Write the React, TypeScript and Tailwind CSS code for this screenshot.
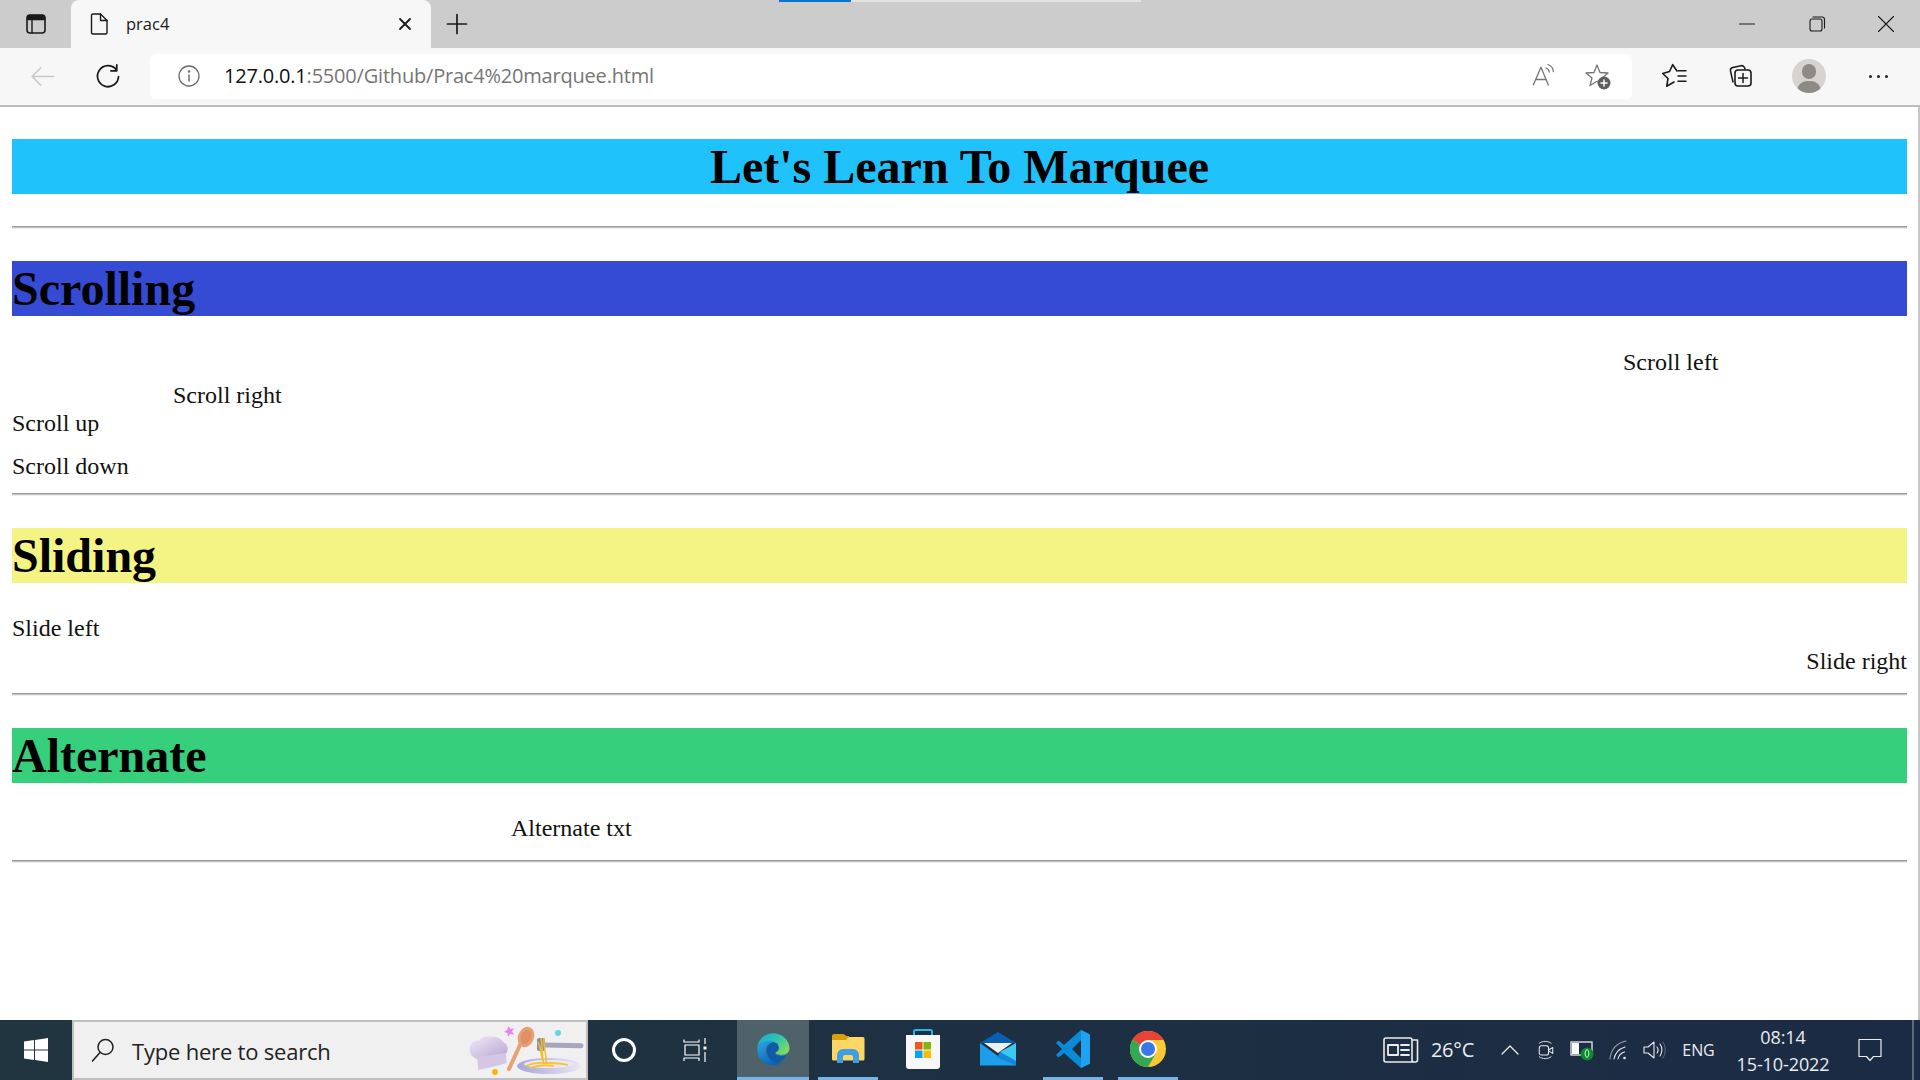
const ui = { fontFamily: '"Open Sans", "Noto Sans", sans-serif' };

const ToolIcon = ({ children, size = 24, view = '0 0 24 24', className = '' }: { children: React.ReactNode; size?: number; view?: string; className?: string }) => (
  <svg width={size} height={size} viewBox={view} fill="none" stroke="currentColor" strokeWidth="1.4" strokeLinecap="round" strokeLinejoin="round" className={className}>
    {children}
  </svg>
);

const Cell = ({ w, children }: { w: string; children?: React.ReactNode }) => (
  <div className={`flex h-full shrink-0 items-center justify-center ${w}`}>{children}</div>
);

const TabBar = () => (
  <div className="relative flex h-[48px] shrink-0 items-center bg-[#cccccc] text-[#1a1a1a]">
    {/* loading bar */}
    <div className="absolute left-[779px] top-0 flex h-[2px]">
      <div className="w-[72px] bg-[#0a74d4]" />
      <div className="w-[290px] bg-[#e2e2e2]" />
    </div>
    <Cell w="w-[71px]">
      <ToolIcon size={24}>
        <rect x="3" y="3" width="18" height="18" rx="3" strokeWidth="1.6" />
        <path d="M3.5 7.5h17V6a2.5 2.5 0 0 0-2.5-2.5H6A2.5 2.5 0 0 0 3.5 6z" fill="currentColor" />
        <path d="M8 8v13" />
      </ToolIcon>
    </Cell>
    <div className="flex h-full w-[360px] shrink-0 items-center rounded-t-[8px] bg-[#f7f7f7] pl-[16px]">
      <ToolIcon size={24}>
        <path d="M6 2h7.5L20 8.500V20.500A1.500 1.500 0 0 1 18.500 22h-12.500A1.500 1.500 0 0 1 4.500 20.500V3.500A1.500 1.500 0 0 1 6 2z" />
        <path d="M13.5 2v6.500H20" />
      </ToolIcon>
      <span className="ml-[15px] text-[16.5px]" style={ui}>prac4</span>
      <ToolIcon size={18} view="0 0 18 18" className="ml-auto mr-[17px]">
        <path d="M4 4l10 10M14 4L4 14" strokeWidth="1.8" />
      </ToolIcon>
    </div>
    <Cell w="w-[52px]">
      <ToolIcon size={24}>
        <path d="M12 2.5v19M2.5 12h19" strokeWidth="1.7" />
      </ToolIcon>
    </Cell>
    <div className="flex-1" />
    <Cell w="w-[70px]">
      <ToolIcon size={18} view="0 0 18 18"><path d="M1.5 9h15" strokeWidth="1.1" /></ToolIcon>
    </Cell>
    <Cell w="w-[70px]">
      <ToolIcon size={18} view="0 0 18 18">
        <rect x="2" y="4" width="12" height="12" rx="2" strokeWidth="1.1" />
        <path d="M5 2h9a2.5 2.5 0 0 1 2.5 2.5V13" strokeWidth="1.1" />
      </ToolIcon>
    </Cell>
    <Cell w="w-[68px]">
      <ToolIcon size={18} view="0 0 18 18"><path d="M1.5 1.5l15 15M16.5 1.5l-15 15" strokeWidth="1.1" /></ToolIcon>
    </Cell>
  </div>
);

const AddressBar = () => (
  <div className="flex h-[59px] shrink-0 items-center border-b-2 border-[#bdbdbd] bg-[#f7f7f7] pb-[1px] text-[#1a1a1a]">
    <Cell w="w-[84px]">
      <ToolIcon size={28} className="text-[#c9c9c9]"><path d="M22 12.5H4M11 5l-7.5 7.5L11 20" strokeWidth="1.3" /></ToolIcon>
    </Cell>
    <Cell w="w-[48px]">
      <ToolIcon size={28}>
        <path d="M19 6.5A9 9 0 1 0 21 12.5" strokeWidth="1.5" />
        <path d="M19.5 2.5v5h-5" strokeWidth="1.5" />
      </ToolIcon>
    </Cell>
    <div className="ml-[18px] flex h-[45px] w-[1482px] shrink-0 items-center rounded-[6px] bg-white">
      <div className="ml-[27px] flex w-[24px] justify-center">
        <ToolIcon size={24} className="text-[#6b6b6b]">
          <circle cx="12" cy="12" r="10" strokeWidth="1.3" />
          <path d="M12 11v6" strokeWidth="1.5" />
          <circle cx="12" cy="7.5" r=".6" fill="currentColor" />
        </ToolIcon>
      </div>
      <span className="ml-[23px] text-[20px] tracking-[-0.2px] text-[#767676]" style={ui}>
        <span className="text-[#111]">127.0.0.1</span>:5500/Github/Prac4%20marquee.html
      </span>
      <div className="ml-auto flex w-[103px] items-center justify-between pr-[21px] text-[#757575]">
        <ToolIcon size={28} view="0 0 28 28">
          <path d="M4.300 23L12 5.300 19.300 23M6.800 17.500h10.500" strokeWidth="1.3" />
          <path d="M17 6c2 .7 3 2.200 3.200 4M19 2.500c3.500 1.200 5 3.600 5.400 7" strokeWidth="1.3" />
        </ToolIcon>
        <ToolIcon size={28} view="0 0 28 28">
          <path d="M14 3l3 7.500 8 .5-6 5 2 7.500-7-4.200L7 23.500l2-7.500-6-5 8-.5z" strokeWidth="1.3" />
          <circle cx="21" cy="21" r="6.500" fill="#5f5f5f" stroke="none" />
          <path d="M21 18v6M18 21h6" stroke="#fff" strokeWidth="1.5" />
        </ToolIcon>
      </div>
    </div>
    <Cell w="w-[84px]">
      <ToolIcon size={28} view="0 0 28 28">
        <path d="M17 9L12.700 2.700 9.500 9.500 2.700 11.500 8 16.500 6.700 24.300 14 20" strokeWidth="1.600" />
        <path d="M18 8.700h8M18 14h8M18 19.300h8" strokeWidth="1.500" />
      </ToolIcon>
    </Cell>
    <Cell w="w-[48px]">
      <ToolIcon size={28} view="0 0 28 28">
        <path d="M7 20l-2.500-11a3 3 0 0 1 2.300-3.500L15 3.700c1.600-.3 2.900.3 3.600 2L19 7" strokeWidth="1.5" />
        <rect x="9" y="8" width="16" height="16" rx="3" strokeWidth="1.6" />
        <path d="M17 11.500v9M12.500 16h9" strokeWidth="1.5" />
      </ToolIcon>
    </Cell>
    <Cell w="w-[90px]">
      <div className="relative h-[34px] w-[34px] overflow-hidden rounded-full bg-[#d6d3d0]">
        <div className="absolute left-[10px] top-[5px] h-[15px] w-[14px] rounded-full bg-[#8e8a85]" />
        <div className="absolute left-[5px] top-[22px] h-[20px] w-[24px] rounded-full bg-[#8e8a85]" />
      </div>
    </Cell>
    <Cell w="w-[48px]">
      <div className="flex gap-[5px]">
        <div className="h-[3px] w-[3px] rounded-full bg-[#222]" />
        <div className="h-[3px] w-[3px] rounded-full bg-[#222]" />
        <div className="h-[3px] w-[3px] rounded-full bg-[#222]" />
      </div>
    </Cell>
  </div>
);

const Rule = () => <div className="mb-[32px] h-[3px] border-t border-b border-t-[#9a9a9a] border-b-[#eeeeee] bg-[#c4c4c4]" />;

const Heading = ({ color, center, children }: { color: string; center?: boolean; children: string }) => (
  <h1 className={`mb-[32px] h-[55px] text-[48px] font-bold leading-[56px] text-black ${color} ${center ? 'text-center' : ''}`}>{children}</h1>
);

const Marquee = ({ h, className = '', children }: { h: string; className?: string; children: string }) => (
  <div className={`${h} flex text-[24px] leading-[28px] text-[#111] ${className}`}>
    <span>{children}</span>
  </div>
);

const Page = () => (
  <div className="min-h-0 flex-1 overflow-hidden border-r-2 border-[#c6c6c6] bg-white pl-[12px] pr-[11px] pt-[32px]" style={{ fontFamily: '"Liberation Serif", serif' }}>
    <Heading color="bg-[#20c2fb]" center>Let's Learn To Marquee</Heading>
    <Rule />
    <Heading color="bg-[#364bd3]">Scrolling</Heading>
    <Marquee h="h-[33px]" className="pl-[1611px]">Scroll left</Marquee>
    <Marquee h="h-[28px]" className="pl-[161px]">Scroll right</Marquee>
    <Marquee h="h-[43px]">Scroll up</Marquee>
    <Marquee h="h-[41px]">Scroll down</Marquee>
    <Rule />
    <Heading color="bg-[#f4f484]">Sliding</Heading>
    <Marquee h="h-[33px]" className="-mt-[1px]">Slide left</Marquee>
    <Marquee h="h-[46px]" className="justify-end">Slide right</Marquee>
    <Rule />
    <Heading color="bg-[#36d07d]">Alternate</Heading>
    <Marquee h="h-[46px]" className="-mt-[1px] pl-[499px]">Alternate txt</Marquee>
    <Rule />
  </div>
);

// the food doodle on the right of the search box
const SearchArt = () => (
  <svg width="126" height="56" viewBox="460 1022 126 56" className="ml-auto shrink-0">
    <defs>
      <linearGradient id="hat" x1="0" y1="0" x2="1" y2="1">
        <stop offset="0" stopColor="#f0e8f6" />
        <stop offset="1" stopColor="#b7a5d3" />
      </linearGradient>
      <linearGradient id="plate" x1="0" y1="0" x2="1" y2="0">
        <stop offset="0" stopColor="#a7a4da" />
        <stop offset="1" stopColor="#ebe6f4" />
      </linearGradient>
    </defs>
    <path d="M478 1059c-6-1-9-6-8-12 1-5 6-7 9-6 2-4 8-6 13-4 4-1 9 1 11 5 4 2 6 6 4 10-1 3-3 5-5 5z" fill="url(#hat)" />
    <path d="M477 1057l29-4 .5 10c-9 3-19 5-28 7z" fill="#d3c7e4" />
    <path d="M508.500 1026l2 3 3.500-.8-2 3 2 3.500-3.500-1-2.500 3-.6-3.800-3.400-1 3.200-2z" fill="#ed7ff0" />
    <circle cx="558" cy="1033" r="3" fill="#5fd7ea" />
    <circle cx="495" cy="1072" r="3" fill="#fbb40f" />
    <path d="M509 1069l11-24" stroke="#e8a077" strokeWidth="4" strokeLinecap="round" />
    <ellipse cx="526" cy="1037" rx="8" ry="10.500" transform="rotate(22 526 1037)" fill="#e8a077" />
    <ellipse cx="526" cy="1037" rx="5" ry="7.500" transform="rotate(22 526 1037)" fill="#e09065" />
    <path d="M544 1045l37 .8" stroke="#a9a5bf" strokeWidth="5" strokeLinecap="round" />
    <rect x="537" y="1038" width="8" height="13" rx="2" fill="#8f8ca3" />
    <ellipse cx="549" cy="1066" rx="32" ry="8" fill="url(#plate)" />
    <ellipse cx="549" cy="1064" rx="25" ry="4" fill="#ece8f3" />
    <path d="M526 1066c8-4 16-3 22-3 6 0 12 0 20 2M530 1068c8-3 18-3 24-2" stroke="#f7c331" strokeWidth="1.800" fill="none" />
    <path d="M541 1038c2 8 0 16 3 26M544 1038c-1 8 3 17 2 26M538 1042c4 8 2 14 6 22" stroke="#f4bd2e" strokeWidth="1.500" fill="none" />
  </svg>
);

const EdgeIcon = () => (
  <svg width="36" height="36" viewBox="0 0 48 48">
    <defs>
      <linearGradient id="edgeA" x1="0" y1="0" x2="1" y2=".7">
        <stop offset="0" stopColor="#16a6d8" />
        <stop offset=".6" stopColor="#35c9a8" />
        <stop offset="1" stopColor="#7fdc5f" />
      </linearGradient>
      <linearGradient id="edgeB" x1="0" y1="0" x2=".6" y2="1">
        <stop offset="0" stopColor="#2aa6e8" />
        <stop offset="1" stopColor="#0c62b5" />
      </linearGradient>
    </defs>
    <path d="M3 24C3 12 12 3 24 3c12 0 22 9 22 20 0 6-5 9-11 9-3 0-8-1-8-3 3-1 5-3 5-6 0-6-7-9-13-9C11 14 3 18 3 24z" fill="url(#edgeA)" />
    <path d="M3 24c1-6 8-11 16-11 5 0 7 2 4 3-7 2-10 8-8 14 2 7 9 12 18 12 2 0 4 0 4-1-4 3-9 5-14 5C11 46 3 35 3 24z" fill="url(#edgeB)" />
    <path d="M16 27c-1-6 3-11 8-12 5 0 8 3 7 8-1 3-4 5-4 7 0 3 6 3 9 2 4 0 6-1 6 0-3 6-9 11-15 10-6-2-11-9-11-15z" fill="#0d5ca8" />
    <path d="M27 29c2 3 9 3 12 2 3 0 5-1 6-2-1 2-5 4-9 4-4 0-8-1-9-4z" fill="#4d8f9c" />
  </svg>
);

const ExplorerIcon = () => (
  <svg width="34" height="36" viewBox="0 0 34 36">
    <path d="M1 5a2 2 0 0 1 2-2h9c1.500 0 2.500 2 4 2h2v5H1z" fill="#d9a109" />
    <path d="M1 9h14l3-3h14a1.500 1.500 0 0 1 1.500 1.500V28a1.500 1.500 0 0 1-1.500 1.500H2.500A1.500 1.500 0 0 1 1 28z" fill="#fdd766" />
    <path d="M6 32v-8a6 6 0 0 1 6-6h10a6 6 0 0 1 6 6v8h-6v-6a2 2 0 0 0-2-2h-6a2 2 0 0 0-2 2v6z" fill="#3f9fe0" />
  </svg>
);

const StoreIcon = () => (
  <svg width="36" height="42" viewBox="0 0 36 42">
    <path d="M9 8V3.500a1.500 1.500 0 0 1 1.500-1.500h15A1.500 1.500 0 0 1 27 3.500V8" fill="none" stroke="#2bb4ea" strokeWidth="2" />
    <path d="M1 7h34v31a3 3 0 0 1-3 3H4a3 3 0 0 1-3-3z" fill="#f7f7f7" />
    <rect x="10" y="14" width="7.500" height="7.500" fill="#f25322" />
    <rect x="18.500" y="14" width="7.500" height="7.500" fill="#7fba00" />
    <rect x="10" y="22.500" width="7.500" height="7.500" fill="#05a6f0" />
    <rect x="18.500" y="22.500" width="7.500" height="7.500" fill="#ffb900" />
  </svg>
);

const MailIcon = () => (
  <svg width="36" height="34" viewBox="0 0 36 34">
    <path d="M0 11L18 0l18 11z" fill="#0a5fb0" />
    <path d="M4 11h28L18 21z" fill="#f0f0f0" />
    <path d="M0 11l18 13 18-13v22.500H0z" fill="#1d9ee9" />
    <path d="M36 11v18L20 20z" fill="#3cc8f5" />
    <path d="M36 33.500V29L20 20l-2 4-2 1z" fill="#1587d8" />
  </svg>
);

const VsCodeIcon = () => (
  <svg width="36" height="40" viewBox="0 0 36 40">
    <path d="M26 1l9 4.500v29L26 39 9 24l-5.500 4.500L1 26l6-6-6-6 2.500-2.500L9 16zM26 11l-9 9 9 9z" fill="#0a8bd8" />
    <path d="M26 1l9 4.500v29L26 39z" fill="#1fa3f0" />
  </svg>
);

const ChromeIcon = () => (
  <svg width="36" height="36" viewBox="6 6 36 36">
    <circle cx="24" cy="24" r="18" fill="#fcc934" />
    <path d="M39.590 15A18 18 0 0 0 8.410 15L24 24l0-9z" fill="#ea4335" />
    <path d="M8.410 15L24 24l7.800 4.500L24 42A18 18 0 0 1 8.410 15z" fill="#34a853" />
    <circle cx="24" cy="24" r="9" fill="#fff" />
    <circle cx="24" cy="24" r="7" fill="#3b78e7" />
  </svg>
);

const AppTile = ({ w, line, active, children }: { w: string; line?: string; active?: boolean; children: React.ReactNode }) => (
  <div className={`relative flex h-full shrink-0 items-center justify-center pb-[3px] ${w} ${active ? 'bg-[#4f6169]' : ''}`}>
    {children}
    {line && <div className={`absolute bottom-0 h-[3px] bg-[#76b5ea] ${line}`} />}
  </div>
);

const Taskbar = () => (
  <div className="flex h-[60px] shrink-0 bg-gradient-to-r from-[#20353f] to-[#1b2b45] text-[#ececec]" style={ui}>
    <Cell w="w-[72px]">
      <svg width="24" height="24" viewBox="0 0 24 24" fill="#fff">
        <path d="M0 3.400l10-1.400v9.400H0zM11 1.900L24 0v11.400H11zM0 12.500h10v9.500L0 20.600zM11 12.500h13V24l-13-1.900z" />
      </svg>
    </Cell>
    <div className="flex h-full w-[516px] shrink-0 items-center border-2 border-[#bfbfbf] bg-[#f0f0f0] pl-[16px] text-[#222]">
      <ToolIcon size={26} view="0 0 26 26">
        <circle cx="15.500" cy="10" r="7.500" strokeWidth="1.500" />
        <path d="M10 15.500L2.500 24" strokeWidth="1.600" />
      </ToolIcon>
      <span className="ml-[16px] mt-[2px] text-[22px] tracking-[-0.2px]">Type here to search</span>
      <SearchArt />
    </div>
    <Cell w="w-[72px]">
      <div className="h-[24px] w-[24px] rounded-full border-[3px] border-white" />
    </Cell>
    <div className="flex h-full w-[77px] shrink-0 items-center justify-center pr-[5px] text-white">
      <ToolIcon size={26} view="0 0 26 26">
        <path d="M1 2.500v2.500h15V2.500M2 8h14v10H2zM1 24v-3h15v3M22 1v6M22 15v10" strokeWidth="1.200" strokeLinecap="butt" />
        <rect x="20.500" y="9.500" width="3" height="3" fill="currentColor" stroke="none" />
      </ToolIcon>
    </div>
    <AppTile w="w-[72px]" line="inset-x-0" active><EdgeIcon /></AppTile>
    <AppTile w="w-[78px]" line="inset-x-[9px]"><ExplorerIcon /></AppTile>
    <AppTile w="w-[72px]"><StoreIcon /></AppTile>
    <AppTile w="w-[77px]"><MailIcon /></AppTile>
    <AppTile w="w-[74px]" line="inset-x-[7px]"><VsCodeIcon /></AppTile>
    <AppTile w="w-[76px]" line="inset-x-[8px]"><ChromeIcon /></AppTile>
    <div className="flex-1" />
    <Cell w="w-[36px]">
      <ToolIcon size={36} view="0 0 36 26">
        <path d="M29 3h5.500v20a2 2 0 0 1-2 2H3a2 2 0 0 1-2-2V3a2 2 0 0 1 2-2h24a2 2 0 0 1 2 2v20a2 2 0 0 0 2 2" strokeWidth="1.600" />
        <rect x="5" y="8" width="10" height="10" strokeWidth="1.800" />
        <path d="M18 8h8M18 13h8M18 18h8" strokeWidth="1.800" />
      </ToolIcon>
    </Cell>
    <Cell w="w-[73px] pr-[6px] text-[20px] tracking-[-0.2px]">26°C</Cell>
    <Cell w="w-[36px]"><ToolIcon size={20} view="0 0 20 20"><path d="M2 14l8-8 8 8" strokeWidth="1.300" /></ToolIcon></Cell>
    <Cell w="w-[36px]">
      <ToolIcon size={22} view="0 0 22 26">
        <path d="M3 5c4-3 10-3 14 0M3 21c4 3 10 3 14 0" strokeWidth="1.100" />
        <rect x="3" y="8" width="11" height="11" rx="2.500" strokeWidth="1.200" />
        <path d="M14 13l5-3v7l-5-3" strokeWidth="1.200" />
      </ToolIcon>
    </Cell>
    <Cell w="w-[36px]">
      <svg width="24" height="22" viewBox="0 0 24 22">
        <rect x="1" y="3" width="21" height="13" fill="none" stroke="#eee" strokeWidth="1.300" />
        <rect x="2" y="4" width="7" height="11" fill="#fff" />
        <circle cx="17" cy="15" r="6.500" fill="#0e8a2a" />
        <path d="M17 10.500c2.500 2 2.500 6 0 8-2.500-2-2.500-6 0-8z" fill="none" stroke="#fff" strokeWidth="1" />
      </svg>
    </Cell>
    <Cell w="w-[37px]">
      <ToolIcon size={22} view="0 0 22 22">
        <path d="M2 20C3 10 9 4 18 2" strokeWidth="1.100" className="text-[#9aa3ad]" />
        <path d="M6 20c1-6 5-10 11-12" strokeWidth="1.100" />
        <path d="M10 20c.5-3 3-6 6.500-7" strokeWidth="1.100" />
        <circle cx="16.500" cy="19" r="1.300" fill="currentColor" stroke="none" />
      </ToolIcon>
    </Cell>
    <Cell w="w-[33px]">
      <ToolIcon size={24} view="0 0 24 24">
        <path d="M2 9h4l6-5v16l-6-5H2z" strokeWidth="1.100" />
        <path d="M15 9c1.500 2 1.500 4 0 6" strokeWidth="1.100" />
        <path d="M18 6c2.500 3.500 2.500 8.500 0 12" strokeWidth="1.100" />
        <path d="M21 4c3 5 3 11 0 16" strokeWidth="1" className="text-[#5f6b78]" />
      </ToolIcon>
    </Cell>
    <Cell w="w-[57px] text-[16px] tracking-[-0.1px]">ENG</Cell>
    <div className="flex h-full w-[112px] shrink-0 flex-col items-center justify-center gap-[5px] text-[18px] leading-[22px] tracking-[-0.1px]">
      <span>08:14</span>
      <span>15-10-2022</span>
    </div>
    <Cell w="w-[62px]">
      <ToolIcon size={26} view="0 0 26 26">
        <path d="M2 2.500h22v17h-7.500L13 23.500 9.500 19.500H2z" strokeWidth="1.200" />
      </ToolIcon>
    </Cell>
    <div className="ml-[11px] mr-[6px] w-[2px] bg-[#5b6b7c]" />
  </div>
);

export default function App() {
  return (
    <div className="flex h-[1080px] w-[1920px] flex-col overflow-hidden">
      <TabBar />
      <AddressBar />
      <Page />
      <Taskbar />
    </div>
  );
}
